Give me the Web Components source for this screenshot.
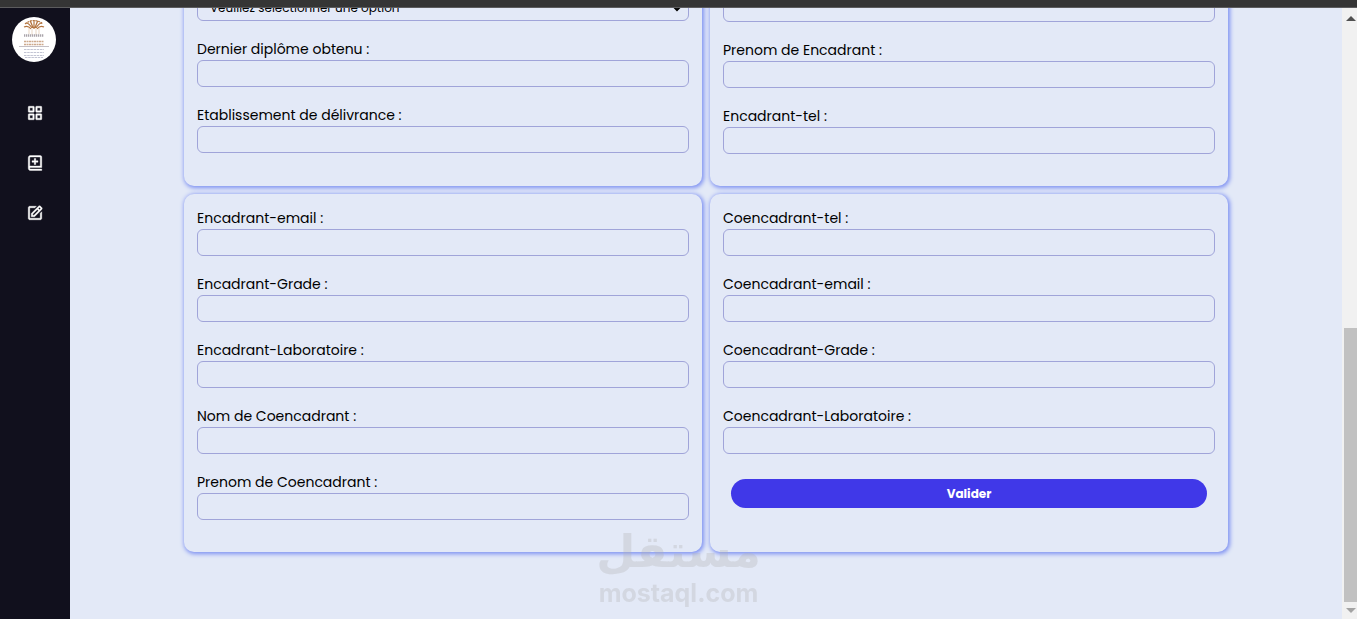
<!DOCTYPE html>
<html lang="fr">
<head>
<meta charset="utf-8">
<title>Inscription</title>
<style>
html, body { margin: 0; height: 100%; overflow: hidden; }
body { font-family: Poppins, Inter, sans-serif; background: #e3e9f7; color: #000; }
</style>
</head>
<body>
<app-shell>
  <side-bar slot="side"></side-bar>
  <form-card>
    <form-select label="Niveau" text="Veuillez sélectionner une option"></form-select>
    <form-field label="Dernier diplôme obtenu :"></form-field>
    <form-field label="Etablissement de délivrance :"></form-field>
  </form-card>
  <form-card>
    <form-field name="Nom de Encadrant"></form-field>
    <form-field label="Prenom de Encadrant :"></form-field>
    <form-field label="Encadrant-tel :"></form-field>
  </form-card>
  <form-card>
    <form-field label="Encadrant-email :"></form-field>
    <form-field label="Encadrant-Grade :"></form-field>
    <form-field label="Encadrant-Laboratoire :"></form-field>
    <form-field label="Nom de Coencadrant :"></form-field>
    <form-field label="Prenom de Coencadrant :"></form-field>
  </form-card>
  <form-card>
    <form-field label="Coencadrant-tel :"></form-field>
    <form-field label="Coencadrant-email :"></form-field>
    <form-field label="Coencadrant-Grade :"></form-field>
    <form-field label="Coencadrant-Laboratoire :"></form-field>
    <submit-button>Valider</submit-button>
  </form-card>
  <scroll-track slot="scroll"></scroll-track>
</app-shell>
<water-mark></water-mark>

<script>
function define(name, render) {
  customElements.define(name, class extends HTMLElement {
    constructor() { super(); this.attachShadow({ mode: "open" }); }
    connectedCallback() { this.shadowRoot.innerHTML = render(this); }
  });
}

define("app-shell", () => `
<style>
:host { display: flex; flex-direction: column; height: 100vh; }
.top { flex: none; height: 7px; background: #353535; border-bottom: 1px solid #5c5c5e; }
.body { flex: 1; min-height: 0; display: flex; }
main { flex: 1; min-width: 0; display: flex; flex-direction: column; justify-content: flex-end; overflow: hidden; padding: 0 114px 67px; }
.grid { display: grid; grid-template-columns: 1fr 1fr; gap: 8px; }
</style>
<div class="top"></div>
<div class="body">
  <slot name="side"></slot>
  <main><div class="grid"><slot></slot></div></main>
  <slot name="scroll"></slot>
</div>`);

define("side-bar", () => `
<style>
:host { flex: none; box-sizing: border-box; width: 70px; background: #11101d; padding-top: 9px; display: flex; flex-direction: column; align-items: center; }
.logo { width: 44px; height: 45px; margin-right: 2px; }
nav { display: flex; flex-direction: column; margin-top: 26px; }
a { display: flex; align-items: center; justify-content: center; width: 50px; height: 50px; }
a svg { width: 18px; height: 18px; fill: #fff; stroke: #fff; stroke-width: .5; }
</style>
<svg class="logo" viewBox="0 0 44 45" fill="none" role="img" aria-label="Logo">
  <ellipse cx="22" cy="22.500" rx="22" ry="22.500" fill="#fff"/>
  <g stroke="#b3743f" stroke-width="1.200">
    <path d="M19 12Q16 8 12 10M20 11Q17 6 14 6M21 11Q19 5 18 4M22 12V3M23 11Q25 5 26 4M24 11Q27 6 30 6M25 12Q28 8 32 10"/>
    <path d="M13 7Q22 0 31 7" stroke-dasharray="2 .8"/>
  </g>
  <path d="M17 11V17M20 12V18M24 12V18M27 11V17" stroke="#dfc6ae" stroke-width=".7"/>
  <path d="M12 18.500H32" stroke="#a9a4aa" stroke-width="2.400" stroke-dasharray="1.300 .7"/>
  <path d="M12 24.500H32M12 27.500H32" stroke="#cda98c" stroke-width="1.500" stroke-dasharray="2 .5"/>
  <path d="M7 29.500H37" stroke="#aaa3ab" stroke-width=".7"/>
  <path d="M12 32.500H32M12 35.500H32M12 38.500H32M13 40.500H31" stroke="#c2c4d3" stroke-width="1.200" stroke-dasharray="2.500 .7"/>
</svg>
<nav>
  <a href="#" aria-label="Tableau de bord"><svg viewBox="0 0 24 24"><path fill-rule="evenodd" d="M4 3h6a1 1 0 0 1 1 1v6a1 1 0 0 1-1 1H4a1 1 0 0 1-1-1V4a1 1 0 0 1 1-1zm1 2v4h4V5zM14 3h6a1 1 0 0 1 1 1v6a1 1 0 0 1-1 1h-6a1 1 0 0 1-1-1V4a1 1 0 0 1 1-1zm1 2v4h4V5zM4 13h6a1 1 0 0 1 1 1v6a1 1 0 0 1-1 1H4a1 1 0 0 1-1-1v-6a1 1 0 0 1 1-1zm1 2v4h4v-4zM14 13h6a1 1 0 0 1 1 1v6a1 1 0 0 1-1 1h-6a1 1 0 0 1-1-1v-6a1 1 0 0 1 1-1zm1 2v4h4v-4z"/></svg></a>
  <a href="#" aria-label="Ajouter"><svg viewBox="0 0 24 24"><path fill-rule="evenodd" d="M6.012 18H21V4a2 2 0 0 0-2-2H6c-1.206 0-3 .799-3 3v14c0 2.201 1.794 3 3 3h15v-2H6.012C5.550 19.988 5 19.805 5 19s.550-.988 1.012-1zM5 16V5c0-.805.550-.988 1-1h13v12z"/><path d="M13 14v-3h3V9h-3V6h-2v3H8v2h3v3z"/></svg></a>
  <a href="#" aria-label="Modifier"><svg viewBox="0 0 24 24"><path fill-rule="evenodd" d="m7 17.013 4.413-.015 9.632-9.540c.378-.378.586-.880.586-1.414s-.208-1.036-.586-1.414l-1.586-1.586c-.756-.756-2.075-.752-2.825-.003L7 12.583v4.430zM18.045 4.458l1.589 1.583-1.597 1.582-1.586-1.585 1.594-1.580zM9 13.417l6.030-5.973 1.586 1.586-6.029 5.971L9 15.006v-1.589z"/><path d="M5 21h14c1.103 0 2-.897 2-2v-8.668l-2 2V19H5V5h6.847l2-2H5c-1.103 0-2 .897-2 2v14c0 1.103.897 2 2 2z"/></svg></a>
</nav>`);

define("form-card", () => `
<style>
:host { display: flex; flex-direction: column; gap: 15px; min-width: 0; padding: 11px 13px 32px; border-radius: 10px; background: #e3e9f7; box-shadow: 1px 1px 4px 1px #7d90f2; }
</style><slot></slot>`);

define("form-field", el => {
  const label = el.getAttribute("label");
  return `
<style>
:host { display: block; }
label { display: block; padding-top: 2px; font-size: 14px; font-weight: 400; line-height: 22px; }
input { display: block; box-sizing: border-box; width: 100%; height: 27px; margin: 0; padding: 0 12px; border: 1px solid #a0a4d9; border-radius: 6px; background: transparent; font: inherit; outline: none; }
</style>
${label ? `<label for="f">${label}</label>` : ""}
<input id="f" type="text"${label ? "" : ` aria-label="${el.getAttribute("name")}"`}>`;
});

define("form-select", el => `
<style>
:host { display: block; position: relative; }
select { display: block; appearance: none; box-sizing: border-box; width: 100%; height: 26px; margin: 0; padding: 0 12px; border: 1px solid #a0a4d9; border-radius: 6px; background: transparent; font: 400 12px/24px Poppins, Inter, sans-serif; color: #000; outline: none; }
svg { position: absolute; right: 7px; top: 10px; width: 10px; height: 7px; pointer-events: none; }
</style>
<select aria-label="${el.getAttribute("label")}"><option>${el.getAttribute("text")}</option></select>
<svg viewBox="0 0 10 7"><path d="M1 1L5 5L9 1" fill="none" stroke="#000" stroke-width="2"/></svg>`);

define("submit-button", () => `
<style>
:host { display: block; margin: 10px 8px 0; }
button { display: block; width: 100%; height: 29px; padding: 0; border: 0; border-radius: 15px; background: #4038e8; color: #fff; font: 700 12px/29px Poppins, Inter, sans-serif; }
</style>
<button type="submit"><slot></slot></button>`);

define("scroll-track", () => `
<style>
:host { flex: none; box-sizing: border-box; width: 15px; padding: 8px 0 6px 2px; background: #f1f1f1; display: flex; flex-direction: column; align-items: flex-end; }
svg { flex: none; width: 11px; height: 5px; }
.space { flex: 307; }
.thumb { flex: 274; width: 100%; background: #c1c1c1; margin-bottom: 6px; }
</style>
<svg viewBox="0 0 11 5"><path d="M0 5L5 0L10 5z" fill="#505050"/></svg>
<div class="space"></div><div class="thumb"></div>
<svg viewBox="0 0 11 5"><path d="M0 0L5 5L10 0z" fill="#a3a3a3"/></svg>`);

define("water-mark", () => `
<style>
:host { position: fixed; left: 0; right: 0; bottom: 11px; display: flex; flex-direction: column; align-items: center; opacity: .3; color: #b0b0b0; pointer-events: none; }
.ar { font: 700 45px/52px "DejaVu Sans", sans-serif; }
.la { font: 700 25px/30px Inter, sans-serif; }
</style>
<div class="ar" lang="ar" dir="rtl">مستقل</div>
<div class="la">mostaql.com</div>`);
</script>
</body>
</html>
